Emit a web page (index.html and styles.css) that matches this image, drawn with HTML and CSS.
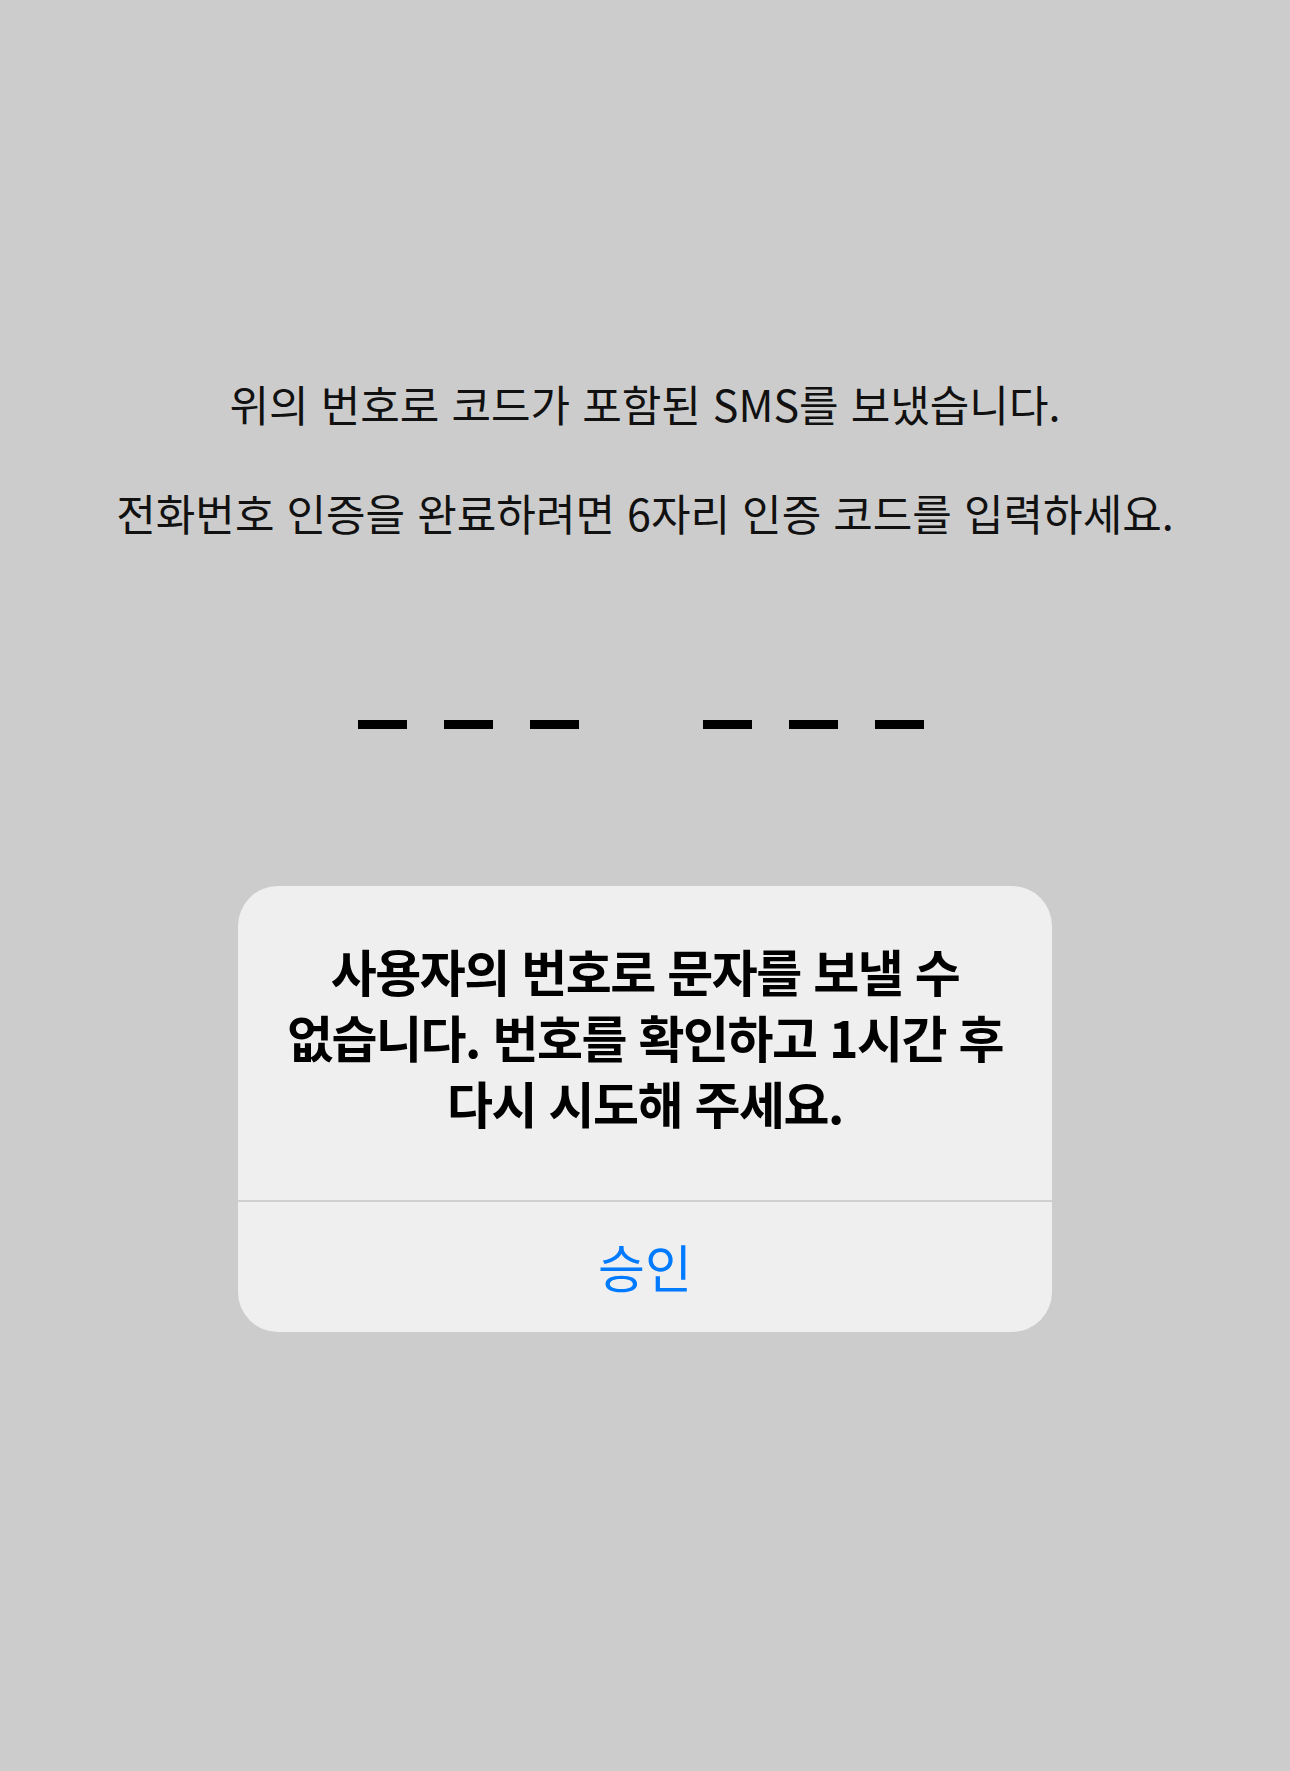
FILE: index.html
```html
<!DOCTYPE html>
<html lang="ko">
<head>
  <meta charset="UTF-8">
  <title>전화번호 인증</title>
  <meta name="viewport" content="width=device-width, initial-scale=1.0">
  <link rel="stylesheet" href="styles.css">
</head>
<body>

  <!-- Verify Section -->
  <div class="screen">
    <div class="intro">
      <p>위의 번호로 코드가 포함된 SMS를 보냈습니다.</p>
      <p>전화번호 인증을 완료하려면 6자리 인증 코드를 입력하세요.</p>
    </div>

    <div class="code">
      <div class="code-group">
        <span class="slot"></span>
        <span class="slot"></span>
        <span class="slot"></span>
      </div>
      <div class="code-group">
        <span class="slot"></span>
        <span class="slot"></span>
        <span class="slot"></span>
      </div>
    </div>

    <!-- Alert -->
    <div class="alert">
      <div class="alert-body">
        사용자의 번호로 문자를 보낼 수 없습니다. 번호를 확인하고 1시간 후 다시 시도해 주세요.
      </div>
      <button class="alert-btn">승인</button>
    </div>
  </div>

</body>
</html>
```

FILE: styles.css
```css
* {
  box-sizing: border-box;
}
body {
  background-color: #cccccc;
  font-family: "Noto Sans CJK KR", "Noto Sans", sans-serif;
  color: #111;
  margin: 0;
  padding: 0;
  word-break: keep-all;
}
.screen {
  display: flex;
  flex-direction: column;
  align-items: center;
  min-height: 1771px;
  padding-top: 376px;
}
.intro {
  text-align: center;
  font-size: 43px;
  line-height: 54px;
}
.intro p {
  margin: 0 0 55px;
}
.code {
  display: flex;
  gap: 124px;
  margin-top: 126px;
  margin-right: 8px;
}
.code-group {
  display: flex;
  gap: 37px;
}
.slot {
  width: 49px;
  height: 9px;
  background-color: #000;
}
.alert {
  margin-top: 157px;
  width: 814px;
  background-color: #efeff0;
  border-radius: 40px;
  overflow: hidden;
}
.alert-body {
  padding: 51px 40px 65px;
  text-align: center;
  font-size: 50px;
  font-weight: 700;
  letter-spacing: -1.5px;
  line-height: 66px;
  color: #000;
}
.alert-btn {
  display: block;
  width: 100%;
  height: 132px;
  padding-bottom: 4px;
  border: none;
  border-top: 2px solid #cfcfcf;
  background-color: transparent;
  font-family: inherit;
  font-size: 51px;
  color: #007aff;
  cursor: pointer;
}
```
